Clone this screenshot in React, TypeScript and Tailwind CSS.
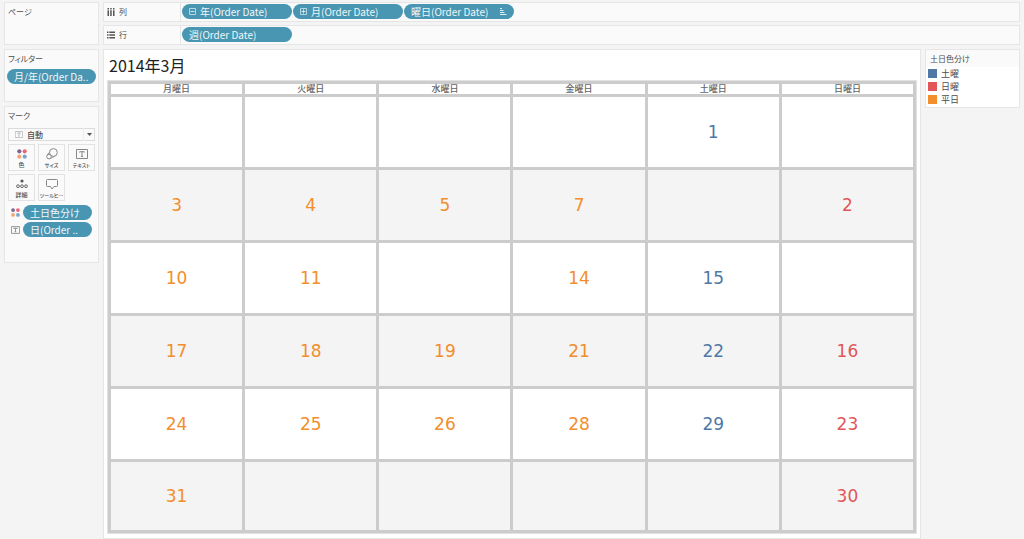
import type { ReactNode } from "react";
import clsx from "clsx";

const weekdays = ["月曜日", "火曜日", "水曜日", "金曜日", "土曜日", "日曜日"];

const weeks: (number | null)[][] = [
  [null, null, null, null, 1, null],
  [3, 4, 5, 7, null, 2],
  [10, 11, null, 14, 15, null],
  [17, 18, 19, 21, 22, 16],
  [24, 25, 26, 28, 29, 23],
  [31, null, null, null, null, 30],
];

const legend = [
  { label: "土曜", swatch: "bg-[#4e79a7]" },
  { label: "日曜", swatch: "bg-[#e15759]" },
  { label: "平日", swatch: "bg-[#f28e2b]" },
];

export default function App() {
  return (
    <div className="flex min-h-screen gap-1 bg-[#f4f4f4] px-1 pt-0.5 font-['Noto_Sans_CJK_JP',sans-serif] text-[#4d4d4d]">
      <aside className="flex w-[95px] shrink-0 flex-col gap-1">
        <Panel title="ページ" className="h-[43px]" />
        <Panel title="フィルター" className="h-[53px]">
          <Pill className="ml-0.5 w-[89px]">月/年(Order Da..</Pill>
        </Panel>
        <Panel title={<label htmlFor="mark-type">マーク</label>} className="h-[157px]">
          <MarksCard />
        </Panel>
      </aside>

      <div className="flex min-w-0 flex-1 flex-col gap-1">
        <div className="flex flex-col gap-[3px]">
          <Shelf icon={<ColumnsIcon />} label="列">
            <Pill className="w-[110px]">
              <ExpandIcon /> 年(Order Date)
            </Pill>
            <Pill className="w-[110px]">
              <ExpandIcon plus /> 月(Order Date)
            </Pill>
            <Pill className="w-[110px]">
              曜日(Order Date)
              <SortIcon />
            </Pill>
          </Shelf>
          <Shelf icon={<RowsIcon />} label="行">
            <Pill className="w-[110px]">週(Order Date)</Pill>
          </Shelf>
        </div>

        <div className="flex flex-1 items-start gap-1">
          <main className="min-w-0 flex-1 self-stretch border border-[#e6e6e6] bg-white px-1 pt-[3px] pb-1">
            <h1 className="mb-1 px-px text-base leading-6 text-[#222]">2014年3月</h1>
            <Calendar />
          </main>
          <section className="w-[95px] shrink-0 border border-[#e6e6e6] bg-white pb-px">
            <h2 className="bg-[#fafafa] px-1 text-[8px] leading-[17px] [font-feature-settings:'palt']">土日色分け</h2>
            <ul>
              {legend.map((item) => (
                <li key={item.label} className="flex items-center gap-1 pl-0.5 text-[9px] leading-[13px]">
                  <span className={clsx("size-[9px]", item.swatch)} />
                  {item.label}
                </li>
              ))}
            </ul>
          </section>
        </div>
      </div>
    </div>
  );
}

function Panel({ title, className, children }: { title: ReactNode; className?: string; children?: ReactNode }) {
  return (
    <section className={clsx("border border-[#e6e6e6] bg-[#fafafa]", className)}>
      <h2 className="px-[3px] pt-0.5 pb-[3px] text-[8px] leading-[14px] [font-feature-settings:'palt']">{title}</h2>
      {children}
    </section>
  );
}

function Pill({ className, children }: { className?: string; children: ReactNode }) {
  return (
    <button
      type="button"
      className={clsx(
        "flex h-[15px] shrink-0 items-center gap-1 rounded-full bg-[#4996b2] px-[7px] text-[10px] leading-[15px] whitespace-nowrap text-[#eef6f9]",
        className,
      )}
    >
      {children}
    </button>
  );
}

function Shelf({ icon, label, children }: { icon: ReactNode; label: string; children: ReactNode }) {
  return (
    <div className="flex h-5 border border-[#e6e6e6] bg-[#fafafa]">
      <div className="flex w-[77px] shrink-0 items-center gap-1 border-r border-[#e6e6e6] pl-[3px] text-[8px]">
        {icon}
        {label}
      </div>
      <div className="flex items-start gap-px pt-px pl-px">{children}</div>
    </div>
  );
}

function MarksCard() {
  return (
    <div className="px-[3px]">
      <div className="relative mt-0.5 flex h-[13px] items-center">
        <select
          id="mark-type"
          className="h-full w-full appearance-none border border-[#dcdcdc] bg-[#fafafa] pl-[18px] text-[8px] leading-[11px] font-medium"
        >
          <option>自動</option>
        </select>
        <TextIcon className="pointer-events-none absolute left-[7px] h-[7px] w-2 text-[#aaa]" />
        <span className="pointer-events-none absolute right-0 flex h-full w-3 items-center justify-center border-l border-[#eee]">
          <svg className="h-[3px] w-[5px]" viewBox="0 0 5 3" fill="#555">
            <path d="M0 0h5L2.5 3z" />
          </svg>
        </span>
      </div>
      <div className="mt-[3px] grid grid-cols-[27px_27px_27px] gap-[3px]">
        <MarkButton icon={<DotsIcon className="size-2.5" />} label="色" />
        <MarkButton icon={<SizeIcon />} label="サイズ" kana />
        <MarkButton icon={<TextIcon className="h-2.5 w-3 text-[#888]" />} label="テキスト" kana />
        <MarkButton icon={<DetailIcon />} label="詳細" />
        <MarkButton icon={<TooltipIcon />} label="ツールヒ…" kana />
      </div>
      <div className="mt-1 flex flex-col gap-0.5">
        <div className="flex items-center gap-[3px] pl-[3px]">
          <DotsIcon className="size-[9px] shrink-0" />
          <Pill className="w-[69px]">土日色分け</Pill>
        </div>
        <div className="flex items-center gap-[3px] pl-[3px]">
          <TextIcon className="h-2 w-[9px] shrink-0 text-[#777]" />
          <Pill className="w-[69px]">日(Order ..</Pill>
        </div>
      </div>
    </div>
  );
}

function MarkButton({ icon, label, kana }: { icon: ReactNode; label: string; kana?: boolean }) {
  return (
    <button
      type="button"
      className="flex h-[27px] flex-col items-center justify-between border border-[#e2e2e2] bg-[#fafafa] pt-[3px]"
    >
      <span className="flex h-3 items-center">{icon}</span>
      <span
        className={clsx(
          "leading-[10px] font-medium whitespace-nowrap [font-feature-settings:'palt']",
          kana ? "text-[5px]" : "text-[6px]",
        )}
      >
        {label}
      </span>
    </button>
  );
}

function Calendar() {
  return (
    <table className="w-full table-fixed border-collapse outline outline-[#e2e2e2]">
      <thead>
        <tr>
          {weekdays.map((day) => (
            <th key={day} className="border-3 border-[#ccc] p-0 text-[9px] leading-[10px] font-medium text-[#666]">
              {day}
            </th>
          ))}
        </tr>
      </thead>
      <tbody>
        {weeks.map((week, i) => (
          <tr key={i} className="h-[73px] even:bg-[#f4f4f4] last:h-[71px]">
            {week.map((date, col) => (
              <td
                key={col}
                className={clsx(
                  "border-3 border-[#ccc] p-0 text-center font-['DejaVu_Sans',sans-serif] text-[17px] leading-5",
                  col === 4 ? "text-[#4e79a7]" : col === 5 ? "text-[#e15759]" : "text-[#f28e2b]",
                )}
              >
                {date}
              </td>
            ))}
          </tr>
        ))}
      </tbody>
    </table>
  );
}

function ColumnsIcon() {
  return (
    <svg className="size-2" viewBox="0 0 8 8" fill="#555">
      <path d="M.5 0h1.5v1.5H.5zM3.2 0h1.5v1.5H3.2zM6 0h1.5v1.5H6zM.5 2.3h1.5V8H.5zM3.2 2.3h1.5V8H3.2zM6 2.3h1.5V8H6z" />
    </svg>
  );
}

function RowsIcon() {
  return (
    <svg className="size-2" viewBox="0 0 8 8" fill="#555">
      <path d="M0 .5h1.5v1.4H0zM0 3.3h1.5v1.4H0zM0 6.1h1.5v1.4H0zM2.3.5H8v1.4H2.3zM2.3 3.3H8v1.4H2.3zM2.3 6.1H8v1.4H2.3z" />
    </svg>
  );
}

function ExpandIcon({ plus }: { plus?: boolean }) {
  return (
    <svg className="size-[7px] shrink-0" viewBox="0 0 7 7" fill="none" stroke="#cfe5ed">
      <path d="M.5.5h6v6h-6z" strokeWidth=".8" />
      <path d={plus ? "M1.5 3.5h4M3.5 1.5v4" : "M1.5 3.5h4"} />
    </svg>
  );
}

function SortIcon() {
  return (
    <svg className="ml-auto h-[7px] w-2 shrink-0" viewBox="0 0 8 7" stroke="#dceef4" fill="none">
      <path d="M1 .5h2M1 2.5h3.5M1 4.5h4.5M1 6.5h6.5" />
    </svg>
  );
}

function TextIcon({ className }: { className?: string }) {
  return (
    <svg className={className} viewBox="0 0 12 10" fill="none" stroke="currentColor">
      <path d="M.5.5h11v9H.5z" />
      <path d="M3.7 3.6V2.7h4.6v.9M6 2.7v4.8M4.9 7.4h2.2" />
    </svg>
  );
}

function DotsIcon({ className }: { className?: string }) {
  return (
    <svg className={className} viewBox="0 0 10 10">
      <circle cx="2.3" cy="2.3" r="2.1" fill="#7b6692" />
      <circle cx="7.7" cy="2.3" r="2.1" fill="#ed6677" />
      <circle cx="2.3" cy="7.7" r="2.1" fill="#f6a572" />
      <circle cx="7.7" cy="7.7" r="2.1" fill="#79a4cf" />
    </svg>
  );
}

function SizeIcon() {
  return (
    <svg className="size-3" viewBox="0 0 12 12" fill="none" stroke="#888">
      <circle cx="7.4" cy="4.5" r="3.9" />
      <circle cx="3" cy="8.6" r="2.3" fill="#fafafa" />
      <path d="M3.4 4.2 1.2 7M8.6 8.3l-4 2.2" strokeWidth=".8" />
    </svg>
  );
}

function DetailIcon() {
  return (
    <svg className="h-2.5 w-3" viewBox="0 0 12 10" fill="none" stroke="#666">
      <circle cx="6" cy="2" r="1.6" fill="#555" stroke="none" />
      <circle cx="2" cy="7.2" r="1.4" />
      <circle cx="6" cy="7.2" r="1.4" />
      <circle cx="10" cy="7.2" r="1.4" />
    </svg>
  );
}

function TooltipIcon() {
  return (
    <svg className="h-[11px] w-3" viewBox="0 0 12 11" fill="none" stroke="#888" strokeLinejoin="round">
      <path d="M1.5.5h9a1 1 0 0 1 1 1v5a1 1 0 0 1-1 1H8L6 10 4.5 7.5h-3a1 1 0 0 1-1-1v-5a1 1 0 0 1 1-1z" />
    </svg>
  );
}
